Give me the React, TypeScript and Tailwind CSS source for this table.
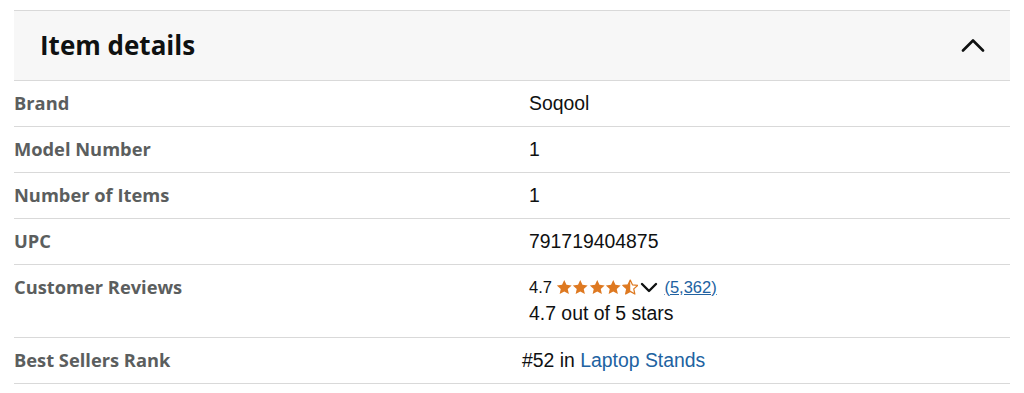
import React from "react";

const Star = ({ kind }: { kind: "full" | "half" }) => (
  <svg width="16.5" height="16.5" viewBox="0 0 24 24" className="shrink-0">
    <defs>
      <clipPath id="halfclip">
        <rect x="0" y="0" width="12" height="24" />
      </clipPath>
    </defs>
    {kind === "full" ? (
      <path d="M12 1.5l3.2 7 7.6.8-5.7 5.1 1.6 7.5L12 18l-6.7 3.9 1.6-7.5L1.2 9.3l7.6-.8z" fill="#de7921" />
    ) : (
      <>
        <path d="M12 1.5l3.2 7 7.6.8-5.7 5.1 1.6 7.5L12 18l-6.7 3.9 1.6-7.5L1.2 9.3l7.6-.8z" fill="none" stroke="#de7921" strokeWidth="1.8" strokeLinejoin="round" />
        <path d="M12 1.5l3.2 7 7.6.8-5.7 5.1 1.6 7.5L12 18l-6.7 3.9 1.6-7.5L1.2 9.3l7.6-.8z" fill="#de7921" clipPath="url(#halfclip)" />
      </>
    )}
  </svg>
);

const Row = ({ label, children, tall }: { label: string; children: React.ReactNode; tall?: boolean }) => (
  <div className={`flex border-b border-[#d9d9d9] ${tall ? "h-[73px]" : "h-[46px]"}`}>
    <div className="w-[515px] pt-[9px] text-[18.3px] leading-[26px] font-bold text-[#5b5e5e]" style={{ fontFamily: "'Open Sans', 'Liberation Sans', sans-serif" }}>
      {label}
    </div>
    <div className="flex-1 pt-[9px] text-[19.4px] leading-[26px] text-[#0f1111]">{children}</div>
  </div>
);

export default function App() {
  return (
    <div className="w-[1024px] h-[393px] bg-white pt-[10px] px-[14px]" style={{ fontFamily: "'Liberation Sans', Arial, sans-serif" }}>
      <div className="w-[996px] border-t border-[#d9d9d9]">
        <div className="h-[70px] bg-[#f7f7f7] border-b border-[#d9d9d9] flex items-center justify-between pl-[26px] pr-[25px]">
          <div className="text-[26px] font-bold text-[#0f1111] leading-none pb-[2px]" style={{ fontFamily: "'Open Sans', 'Liberation Sans', sans-serif" }}>
            Item details
          </div>
          <svg width="24" height="14" viewBox="0 0 24 14" className="mb-[2px]">
            <path d="M2 12.5L12 2.5l10 10" fill="none" stroke="#0f1111" strokeWidth="2.6" strokeLinecap="round" strokeLinejoin="round" />
          </svg>
        </div>
        <Row label="Brand">Soqool</Row>
        <Row label="Model Number">1</Row>
        <Row label="Number of Items">1</Row>
        <Row label="UPC">791719404875</Row>
        <Row label="Customer Reviews" tall>
          <div className="flex items-center h-[26px] text-[16.5px]">
            <span>4.7</span>
            <span className="flex ml-[4px] gap-0">
              <Star kind="full" />
              <Star kind="full" />
              <Star kind="full" />
              <Star kind="full" />
              <Star kind="half" />
            </span>
            <svg width="18" height="12" viewBox="0 0 18 12" className="ml-[2px]">
              <path d="M2 3l7 7 7-7" fill="none" stroke="#0f1111" strokeWidth="2.4" strokeLinecap="round" strokeLinejoin="round" />
            </svg>
            <a className="ml-[6px] text-[#2162a1] underline">(5,362)</a>
          </div>
          <div>4.7 out of 5 stars</div>
        </Row>
        <Row label="Best Sellers Rank">
          <div className="-ml-[7px]">
            #52 in <a className="text-[#2162a1]">Laptop Stands</a>
          </div>
        </Row>
      </div>
    </div>
  );
}
